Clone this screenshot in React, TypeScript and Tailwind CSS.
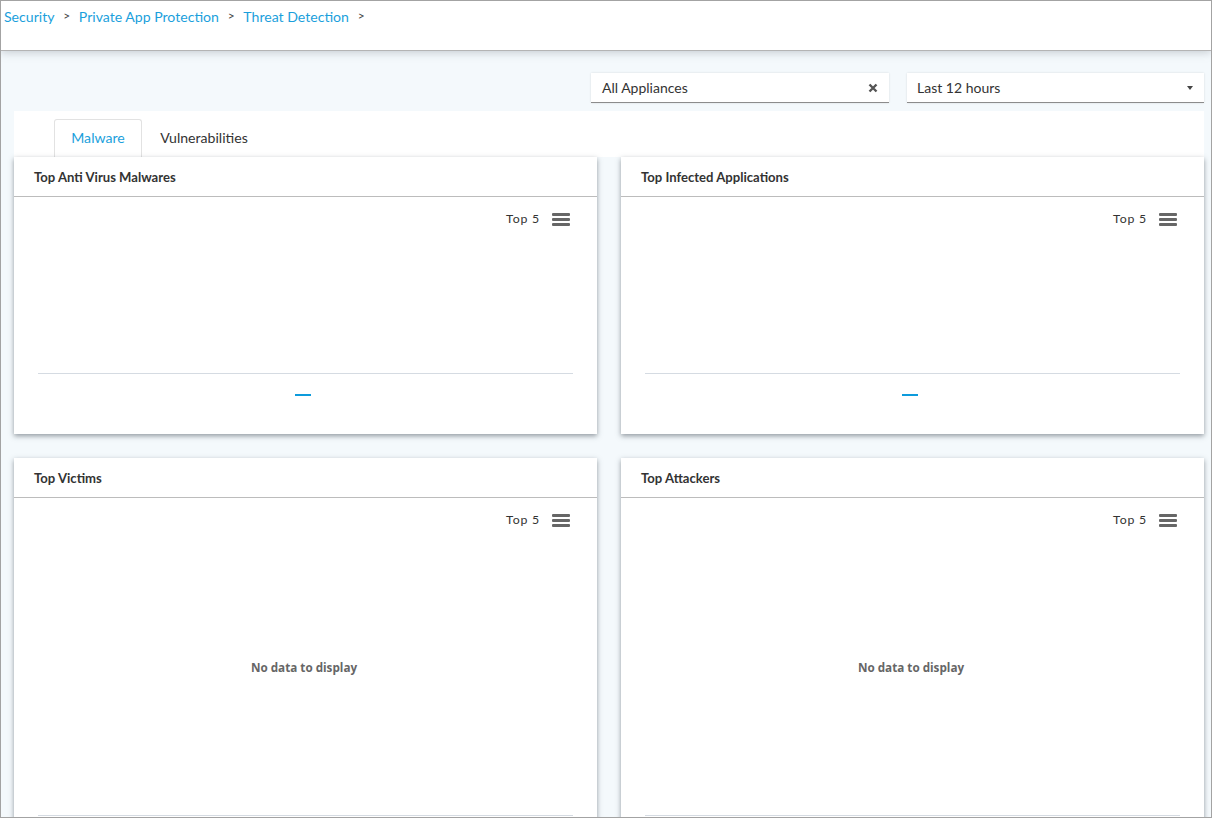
import React from 'react';

function Burger() {
  return (
    <div className="flex w-[18px] flex-col gap-[2px]">
      <div className="h-[3px] rounded-[1px] bg-[#666666]" />
      <div className="h-[3px] rounded-[1px] bg-[#666666]" />
      <div className="h-[3px] rounded-[1px] bg-[#666666]" />
    </div>
  );
}

function Card({ title, empty }: { title: string; empty?: boolean }) {
  return (
    <div className={`flex flex-col bg-white shadow-[0_2px_5px_rgba(50,60,70,0.5)] ${empty ? 'h-[400px]' : 'h-[277px]'}`}>
      <div className="flex h-[40px] shrink-0 items-center border-b border-[#bcbcbc] pl-5 pt-[2px] text-[13.1px] font-bold text-[#333333]">
        {title}
      </div>
      <div className="flex flex-1 flex-col px-6">
        <div className="flex h-[44px] shrink-0 items-center justify-end gap-[12px] pr-[3px] pt-[1px]">
          <span className="-mt-[1px] text-[12.3px] tracking-[0.8px] text-[#333333]">Top 5</span>
          <Burger />
        </div>
        {empty ? (
          <div className="flex h-[136px] shrink-0 items-end justify-center pb-[1px] pr-[3px] font-['Open_Sans'] text-[11.7px] font-bold text-[#666666]">
            No data to display
          </div>
        ) : (
          <>
            <div className="h-[133px] shrink-0 border-b border-[#d5dbe2]" />
            <div className="mr-[6px] mt-5 h-[2px] w-4 shrink-0 self-center bg-[#0d9bdc]" />
          </>
        )}
        {empty && <div className="mt-[137px] h-px shrink-0 bg-[#d5dbe2]" />}
      </div>
    </div>
  );
}

export default function App() {
  return (
    <div className="h-[818px] w-[1212px] overflow-hidden border border-[#a3a3a3] bg-[#f4f9fc] font-['Lato',sans-serif]">
      <div className="flex h-[50px] items-start gap-[8.7px] border-b border-[#b4b4b4] bg-white pl-[3px] pt-[5px] text-[14.1px] shadow-[0_2px_8px_rgba(120,130,140,0.35)]">
        <a className="text-[#1b9fdc]">Security</a>
        <span className="text-[12px] leading-[20px] text-[#444444]">&gt;</span>
        <a className="text-[#1b9fdc]">Private App Protection</a>
        <span className="text-[12px] leading-[20px] text-[#444444]">&gt;</span>
        <a className="text-[#1b9fdc]">Threat Detection</a>
        <span className="text-[12px] leading-[20px] text-[#444444]">&gt;</span>
      </div>

      <div className="flex h-[60px] items-start justify-end gap-[18px] pr-[7px] pt-[22px] text-[14px] text-[#333333]">
        <div className="flex h-[30px] w-[298px] items-center justify-between border-b border-[#8c8c8c] bg-white pl-[11px] pr-[11px] shadow-[0_0_2px_rgba(0,0,0,0.12)]">
          <span>All Appliances</span>
          <svg width="10" height="10" viewBox="0 0 10 10">
            <path d="M1.5 1.5 8.5 8.5M8.5 1.5 1.5 8.5" stroke="#555555" strokeWidth="2.4" />
          </svg>
        </div>
        <div className="flex h-[30px] w-[297px] items-center justify-between border-b border-[#8c8c8c] bg-white pl-[10px] pr-[11px] shadow-[0_0_2px_rgba(0,0,0,0.12)]">
          <span>Last 12 hours</span>
          <div className="mt-[1px] h-0 w-0 border-x-[3.5px] border-t-[4px] border-x-transparent border-t-[#444444]" />
        </div>
      </div>

      <div className="ml-[13px] mr-[7px] h-[46px] bg-white pl-[40px] pt-[8px] text-[14.1px]">
        <div className="flex h-[38px] items-stretch">
          <div className="flex w-[88px] items-center justify-center rounded-t-[3px] border border-b-0 border-[#e2e2e2] pb-[2px] text-[#1b9fdc]">
            Malware
          </div>
          <div className="flex w-[124px] items-center justify-center text-[#333333]">Vulnerabilities</div>
        </div>
      </div>

      <div className="ml-[13px] mr-[7px] grid grid-cols-2 gap-x-6 gap-y-6">
        <Card title="Top Anti Virus Malwares" />
        <Card title="Top Infected Applications" />
        <Card title="Top Victims" empty />
        <Card title="Top Attackers" empty />
      </div>
    </div>
  );
}
